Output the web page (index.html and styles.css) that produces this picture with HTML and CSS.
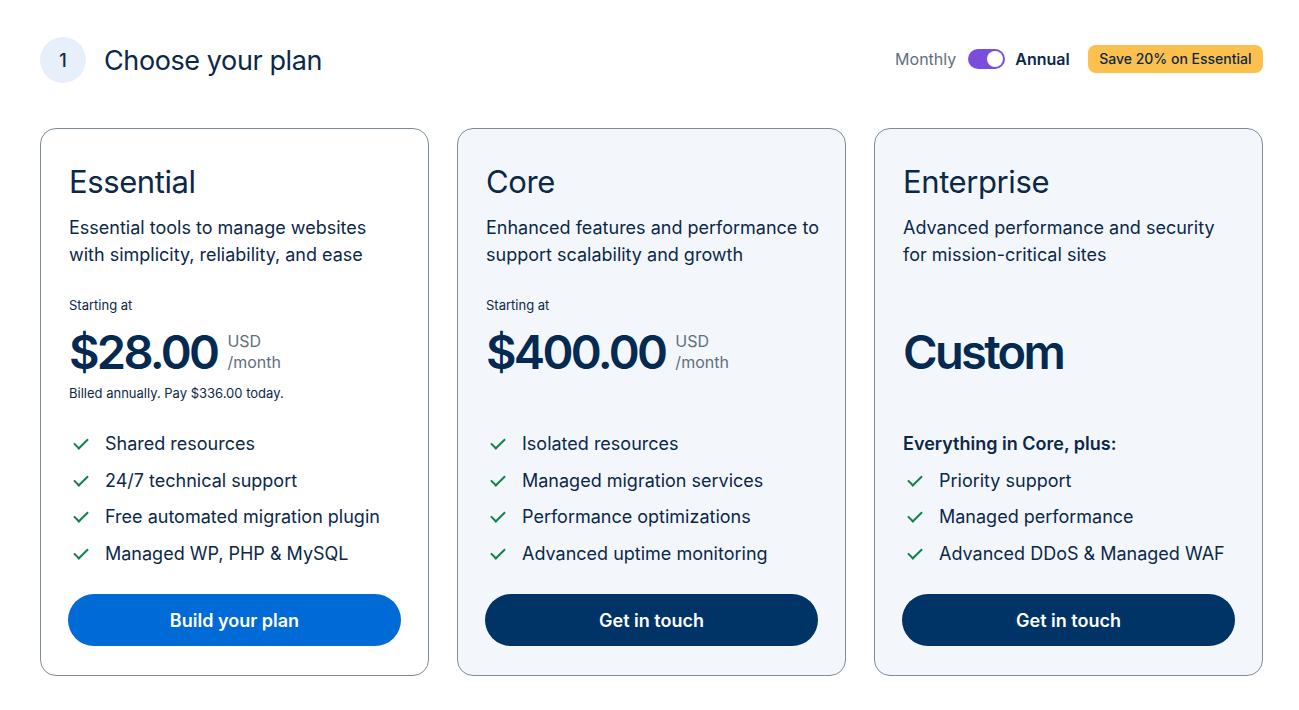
FILE: index.html
```html
<!doctype html>
<html lang="en">
  <head>
    <meta charset="UTF-8" />
    <meta name="viewport" content="width=device-width, initial-scale=1.0" />
    <title>Choose your plan</title>
    <link rel="stylesheet" href="styles.css">
  </head>
  <body>
    <main class="plans">
      <header class="plans-header">
        <div class="step">
          <span class="step-number">1</span>
          <h1>Choose your plan</h1>
        </div>

        <div class="billing">
          <span class="billing-label">Monthly</span>
          <button class="switch is-on" aria-label="Toggle annual billing"><span class="switch-knob"></span></button>
          <span class="billing-label billing-label-active">Annual</span>
          <span class="save-badge">Save 20% on Essential</span>
        </div>
      </header>

      <div class="plan-grid">
        <!-- Essential -->
        <section class="plan-card plan-card-light">
          <h2>Essential</h2>
          <p class="plan-desc">Essential tools to manage websites with simplicity, reliability, and ease</p>

          <div class="pricing">
            <div class="price-caption">Starting at</div>
            <div class="price-row">
              <span class="price">$28.00</span>
              <span class="price-unit">USD<br>/month</span>
            </div>
            <div class="price-note">Billed annually. Pay $336.00 today.</div>
          </div>

          <ul class="features">
            <li>Shared resources</li>
            <li>24/7 technical support</li>
            <li>Free automated migration plugin</li>
            <li>Managed WP, PHP &amp; MySQL</li>
          </ul>

          <button class="plan-button plan-button-primary">Build your plan</button>
        </section>

        <!-- Core -->
        <section class="plan-card">
          <h2>Core</h2>
          <p class="plan-desc">Enhanced features and performance to support scalability and growth</p>

          <div class="pricing">
            <div class="price-caption">Starting at</div>
            <div class="price-row">
              <span class="price">$400.00</span>
              <span class="price-unit">USD<br>/month</span>
            </div>
          </div>

          <ul class="features">
            <li>Isolated resources</li>
            <li>Managed migration services</li>
            <li>Performance optimizations</li>
            <li>Advanced uptime monitoring</li>
          </ul>

          <button class="plan-button">Get in touch</button>
        </section>

        <!-- Enterprise -->
        <section class="plan-card">
          <h2>Enterprise</h2>
          <p class="plan-desc">Advanced performance and security for mission-critical sites</p>

          <div class="pricing pricing-custom">
            <span class="price">Custom</span>
          </div>

          <ul class="features">
            <li class="features-lead">Everything in Core, plus:</li>
            <li>Priority support</li>
            <li>Managed performance</li>
            <li>Advanced DDoS &amp; Managed WAF</li>
          </ul>

          <button class="plan-button">Get in touch</button>
        </section>
      </div>
    </main>
  </body>
</html>
```

FILE: styles.css
```css
* {
  margin: 0;
  padding: 0;
  box-sizing: border-box;
}

body {
  font-family: Inter, 'Noto Sans', Arial, sans-serif;
  background: #ffffff;
  color: #0c2848;
}

.plans {
  width: 1223px;
  margin-left: 40px;
  padding-top: 37px;
}

/* Header */

.plans-header {
  display: flex;
  align-items: center;
  justify-content: space-between;
  margin-bottom: 45px;
}

.step {
  display: flex;
  align-items: center;
  gap: 18px;
}

.step-number {
  width: 46px;
  height: 46px;
  border-radius: 50%;
  background: #e6effa;
  display: flex;
  align-items: center;
  justify-content: center;
  font-size: 18px;
  font-weight: 500;
  color: #0c2848;
}

h1 {
  font-size: 27px;
  font-weight: 400;
  color: #0c2848;
  letter-spacing: -0.4px;
}

.billing {
  display: flex;
  align-items: center;
  margin-top: -2px;
}

.billing-label {
  font-size: 16px;
  color: #5f6f80;
}

.billing-label-active {
  color: #0c2848;
  font-weight: 600;
  margin-right: 18px;
}

.switch {
  position: relative;
  width: 37px;
  height: 20px;
  border: none;
  border-radius: 10px;
  background: #7b4ddd;
  margin: 0 10px 0 12px;
  cursor: pointer;
}

.switch-knob {
  position: absolute;
  top: 2px;
  right: 2px;
  width: 16px;
  height: 16px;
  border-radius: 50%;
  background: #ffffff;
}

.save-badge {
  background: #fcc04f;
  color: #0c2848;
  font-size: 14px;
  font-weight: 500;
  border-radius: 8px;
  padding: 5px 11.5px;
  line-height: 18px;
}

/* Plan cards */

.plan-grid {
  display: grid;
  grid-template-columns: repeat(3, 1fr);
  gap: 28px;
}

.plan-card {
  display: flex;
  flex-direction: column;
  background: #f3f7fc;
  border: 1px solid #7f8c98;
  border-radius: 16px;
  padding: 33px 22px 29px 28px;
  height: 548px;
}

.plan-card-light {
  background: #ffffff;
}

.plan-card h2 {
  font-size: 31px;
  font-weight: 400;
  line-height: 40px;
  color: #0c2848;
  letter-spacing: -0.4px;
}

.plan-desc {
  margin-top: 12px;
  font-size: 18px;
  line-height: 27px;
  color: #0c2848;
  height: 54px;
}

.pricing {
  margin-top: 27px;
  height: 108px;
}

.price-caption {
  font-size: 13px;
  line-height: 20px;
  color: #0c2848;
}

.price-row {
  display: flex;
  align-items: center;
  gap: 10px;
  margin-top: 9px;
  height: 56px;
}

.price {
  font-size: 47px;
  font-weight: 600;
  line-height: 56px;
  color: #042a52;
  letter-spacing: -2.7px;
}

.price-unit {
  font-size: 16px;
  line-height: 21px;
  color: #5f6f80;
}

.price-note {
  margin-top: 3px;
  font-size: 13px;
  line-height: 20px;
  color: #0c2848;
}

.pricing-custom {
  padding-top: 29px;
}

.features {
  list-style: none;
  margin-top: 27px;
  display: flex;
  flex-direction: column;
  gap: 9.5px;
}

.features li {
  position: relative;
  padding-left: 36px;
  font-size: 18px;
  line-height: 27px;
  color: #0c2848;
}

.features li::before {
  content: '';
  position: absolute;
  left: 5px;
  top: 8px;
  width: 12px;
  height: 6px;
  border-left: 2px solid #13804d;
  border-bottom: 2px solid #13804d;
  transform: rotate(-45deg);
}

.features .features-lead {
  padding-left: 0;
  font-weight: 600;
}

.features .features-lead::before {
  display: none;
}

.plan-button {
  margin: auto 5px 0 -1px;
  height: 52px;
  border: none;
  border-radius: 26px;
  background: #003366;
  color: #ffffff;
  font-family: inherit;
  font-size: 18px;
  font-weight: 600;
  cursor: pointer;
}

.plan-button-primary {
  background: #006ad7;
}
```
